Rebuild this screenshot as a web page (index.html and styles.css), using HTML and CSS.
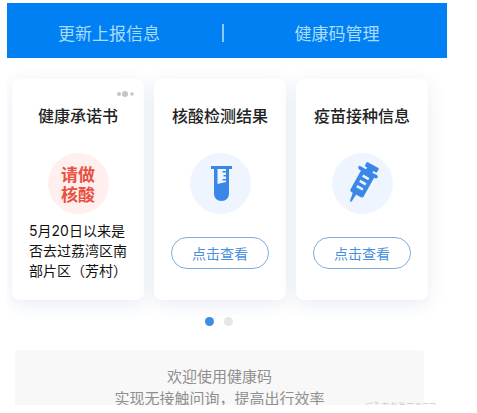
FILE: index.html
```html
<!DOCTYPE html>
<html lang="zh-CN">
<head>
<meta charset="utf-8">
<meta name="viewport" content="width=device-width, initial-scale=1">
<title>健康码</title>
<link rel="stylesheet" href="styles.css">
</head>
<body>
<main class="screen">
  <nav class="topbar">
    <a class="topbar-link" href="#">更新上报信息</a>
    <span class="topbar-divider"></span>
    <a class="topbar-link" href="#">健康码管理</a>
  </nav>

  <section class="cards">
    <article class="card">
      <button class="more" type="button" aria-label="更多">
        <svg width="18" height="8" viewBox="0 0 18 8"><g fill="#c3c5c9"><circle cx="3" cy="4" r="2"/><circle cx="9" cy="4" r="3"/><circle cx="16" cy="4" r="1.800"/></g></svg>
      </button>
      <h2 class="card-title">健康承诺书</h2>
      <div class="badge badge-alert"><span>请做</span><span>核酸</span></div>
      <p class="card-text">5月20日以来是否去过荔湾区南部片区（芳村）</p>
    </article>

    <article class="card">
      <h2 class="card-title">核酸检测结果</h2>
      <div class="badge">
        <svg width="61" height="61" viewBox="0 0 61 61">
          <path fill="#3b87e8" fill-rule="evenodd" d="M21 13H42V16H39V40.500C39 45 36 48 31.500 48S24 45 24 40.500V16H21ZM27.500 16V31L36 29V27.500H32.500V26H36V23.500H33.500V22H36V19.500H32.500V18H36V16Z"/>
        </svg>
      </div>
      <button class="view" type="button">点击查看</button>
    </article>

    <article class="card">
      <h2 class="card-title">疫苗接种信息</h2>
      <div class="badge">
        <svg width="61" height="61" viewBox="0 0 61 61">
          <g transform="translate(30 30) rotate(29)" fill="#3b87e8">
            <path d="M-5-21H7Q8-21 8-19.500V-17.500Q8-16 7-16H4V-12H-3V-16H-5Q-6-16-6-17.500V-19.500Q-6-21-5-21Z"/>
            <path fill-rule="evenodd" d="M-9-14H9Q11-14 11-12.500T9-10.500H8V11Q8 13 6 13H-5Q-7 13-7 11V-10.500H-9Q-11-10.500-11-12.500T-9-14ZM-3-8V-5.500H4V-8ZM-3-2V.500H4V-2ZM-3 4V6.500H4V4Z"/>
            <path d="M-3.500 12H.500L0 21Q-1 22.500-2 21Z"/>
          </g>
        </svg>
      </div>
      <button class="view" type="button">点击查看</button>
    </article>
  </section>

  <div class="pager">
    <span class="dot dot-active"></span>
    <span class="dot"></span>
  </div>

  <footer class="notice">
    <p>欢迎使用健康码</p>
    <p>实现无接触问询，提高出行效率</p>
  </footer>

  <svg class="mark" width="72" height="4" viewBox="0 0 72 4" aria-hidden="true">
    <g fill="none" stroke="#d4d4d4">
      <path d="M1 4Q3 1.500 8 2M9 1Q12 0 13 3M10 3L14 2M17 2.500H24M20 1.500V4M26 3H32M28 1V4M34 2H39M35 3.500H40M42 2.500H49M51 3H56M53 1.500V4M58 2.500H63M65 2.500H70V4"/>
    </g>
  </svg>
</main>
</body>
</html>
```
FILE: styles.css
```css
* {
  box-sizing: border-box;
}

body {
  margin: 0;
  background: #fff;
  color: #222;
  font-family: "Noto Sans CJK SC", sans-serif;
}

h2,
p {
  margin: 0;
}

button {
  padding: 0;
  border: 0;
  background: none;
  font: inherit;
}

svg {
  display: block;
}

.screen {
  position: relative;
  height: calc(100vh - 11px);
  margin: 3px 30px 8px 7px;
  overflow: hidden;
}

.topbar {
  display: grid;
  grid-template-columns: 1fr 24px 1fr;
  align-items: center;
  justify-items: center;
  height: 55px;
  padding: 4px 8px 0 0;
  background: #0080f2;
}

.topbar-link {
  color: #a9dcff;
  font-size: 17px;
  line-height: 24px;
  text-decoration: none;
}

.topbar-divider {
  width: 2px;
  height: 18px;
  background: #8accff;
}

.cards {
  display: grid;
  grid-template-columns: repeat(3, 1fr);
  gap: 10px;
  padding: 21px 19px 0 5px;
}

.card {
  position: relative;
  display: flex;
  flex-direction: column;
  align-items: center;
  height: 221px;
  padding-top: 24px;
  border-radius: 8px;
  background: #fff;
  box-shadow: 0 4px 18px rgba(80, 120, 180, 0.14);
}

.more {
  position: absolute;
  top: 11px;
  right: 10px;
}

.card-title {
  color: #222;
  font-size: 16px;
  font-weight: 500;
  line-height: 24px;
}

.badge {
  display: flex;
  flex-direction: column;
  align-items: center;
  justify-content: center;
  width: 61px;
  height: 61px;
  margin-top: 26px;
  border-radius: 50%;
  background: #eff5ff;
}

.badge-alert {
  background: #ffefee;
  color: #e8503f;
  font-size: 17px;
  font-weight: 700;
  line-height: 20px;
}

.card-text {
  width: 98px;
  margin-top: 7px;
  color: #111;
  font-family: Inter, "Noto Sans CJK SC", sans-serif;
  font-size: 14px;
  line-height: 20px;
}

.view {
  width: 98px;
  height: 32px;
  margin-top: 23px;
  border: 1px solid #7eaee0;
  border-radius: 16px;
  color: #4a8fdb;
  font-size: 14px;
}

.pager {
  display: flex;
  gap: 10px;
  justify-content: center;
  padding: 17px 16px 0 0;
}

.dot {
  width: 9px;
  height: 9px;
  border-radius: 50%;
  background: #e6e6e6;
}

.dot-active {
  background: #3d8de6;
}

.notice {
  margin: 24px 23px 0 8px;
  padding: 15px 0;
  border-radius: 4px;
  background: #f8f8f8;
  color: #8f8f8f;
  font-size: 15px;
  line-height: 22px;
  text-align: center;
}

.mark {
  position: absolute;
  right: 10px;
  bottom: 0;
}
```
